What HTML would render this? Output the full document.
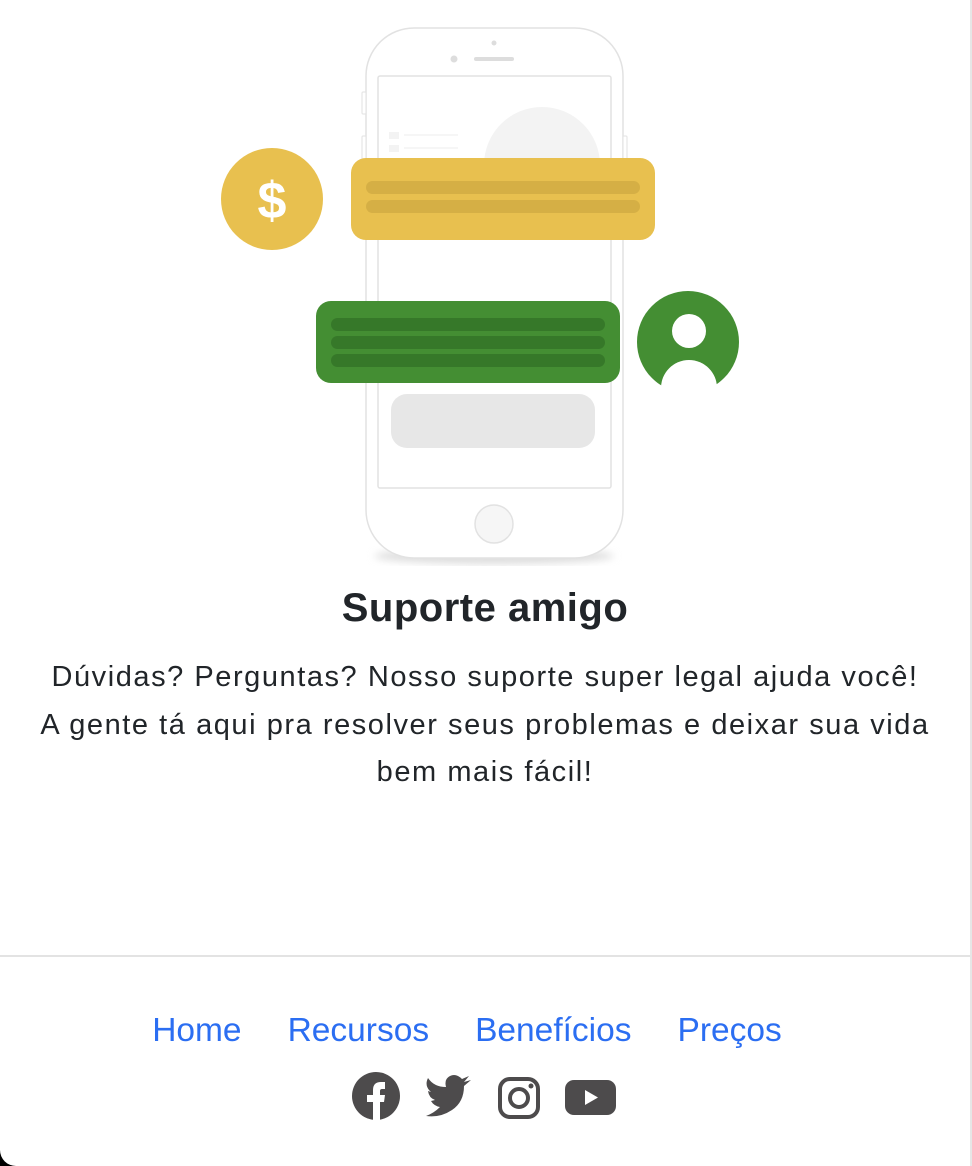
<!DOCTYPE html>
<html><head><meta charset="utf-8"><style>
html,body{margin:0;padding:0;background:#000;}
.page{position:relative;width:970px;height:1166px;background:#fff;border-right:2px solid #e6e6e6;border-bottom-left-radius:16px;overflow:hidden;font-family:"Liberation Sans",Helvetica,Arial,sans-serif;color:#212529;}
h2{position:absolute;top:584px;left:0;width:970px;text-align:center;margin:0;font-size:40px;font-weight:bold;line-height:48px;letter-spacing:0.5px;}
p{position:absolute;top:654px;left:0;width:970px;text-align:center;margin:0;font-size:29px;line-height:47.5px;letter-spacing:1.55px;white-space:nowrap;}
hr{position:absolute;top:955px;left:0;width:970px;margin:0;border:0;border-top:2px solid #e3e3e3;}
.links{position:absolute;top:1009px;left:-18px;width:970px;text-align:center;font-size:33.5px;line-height:44px;white-space:nowrap;}
.links a{color:#2b6ef2;text-decoration:none;margin:0 23px;}
</style></head><body><div class="page">
<svg width="970" height="580" style="position:absolute;left:0;top:0">
<defs><filter id="sh"><feGaussianBlur stdDeviation="4"/></filter></defs>
<ellipse cx="494" cy="556" rx="120" ry="8" fill="#ddd" filter="url(#sh)"/>
<rect x="366" y="28" width="257" height="530" rx="48" fill="#fff" stroke="#e2e2e2" stroke-width="1.5"/>
<rect x="362" y="92" width="4" height="22" rx="1" fill="#fff" stroke="#e2e2e2"/>
<rect x="362" y="136" width="4" height="40" rx="1" fill="#fff" stroke="#e2e2e2"/>
<rect x="623" y="136" width="4" height="40" rx="1" fill="#fff" stroke="#e2e2e2"/>
<circle cx="494" cy="43" r="2.5" fill="#ddd"/>
<circle cx="454" cy="59" r="3.5" fill="#ddd"/>
<rect x="474" y="57" width="40" height="4" rx="2" fill="#ddd"/>
<rect x="378" y="76" width="233" height="412" rx="2" fill="#fff" stroke="#e2e2e2" stroke-width="1.5"/>
<circle cx="542" cy="165" r="58" fill="#f3f3f3"/>
<rect x="389" y="132" width="10" height="7" fill="#f3f3f3"/><rect x="389" y="145" width="10" height="7" fill="#f3f3f3"/>
<line x1="404" y1="135" x2="458" y2="135" stroke="#eee"/><line x1="404" y1="148" x2="458" y2="148" stroke="#eee"/>
<circle cx="494" cy="524" r="19" fill="#f6f6f6" stroke="#e2e2e2" stroke-width="1.5"/>
<rect x="391" y="394" width="204" height="54" rx="16" fill="#e7e7e7"/>
<rect x="351" y="158" width="304" height="82" rx="15" fill="#e8c04f"/>
<rect x="366" y="181" width="274" height="13" rx="6.5" fill="#d5af45"/>
<rect x="366" y="200" width="274" height="13" rx="6.5" fill="#d5af45"/>
<circle cx="272" cy="199" r="51" fill="#e8c04f"/>
<text x="272" y="218" text-anchor="middle" font-family="Liberation Sans" font-weight="bold" font-size="52" fill="#fff">$</text>
<rect x="316" y="301" width="304" height="82" rx="15" fill="#448e33"/>
<rect x="331" y="318" width="274" height="13" rx="6.5" fill="#367829"/>
<rect x="331" y="336" width="274" height="13" rx="6.5" fill="#367829"/>
<rect x="331" y="354" width="274" height="13" rx="6.5" fill="#367829"/>
<circle cx="688" cy="342" r="51" fill="#448e33"/>
<circle cx="689" cy="331" r="17" fill="#fff"/>
<path d="M661 388 A28 28 0 0 1 717 388 Q689 400 661 388Z" fill="#fff"/>
</svg>
<h2>Suporte amigo</h2>
<p>Dúvidas? Perguntas? Nosso suporte super legal ajuda você!<br>A gente tá aqui pra resolver seus problemas e deixar sua vida<br>bem mais fácil!</p>
<hr>
<div class="links"><a>Home</a><a>Recursos</a><a>Benefícios</a><a>Preços</a></div>
<svg width="300" height="60" style="position:absolute;left:340px;top:1066px" fill="#4d4b4c">
<circle cx="36" cy="30" r="24"/>
<path d="M33 54 V36 H27 V29 H33 V24 Q33 16 41 16 H45 V23 H42 Q40 23 40 25 V29 H45 L44 36 H40 V54Z" fill="#fff"/>
<path d="M86 50 Q100 52 112 44 Q124 36 124 20 L131 14 L124 16 L129 10 L122 13 Q116 7 110 10 Q104 13 106 21 Q94 21 88 12 Q84 20 91 26 L88 25 Q89 32 95 34 L91 35 Q94 40 100 41 Q94 47 86 50Z"/>
<rect x="160" y="13" width="38" height="38" rx="10" fill="none" stroke="#4d4b4c" stroke-width="4"/>
<circle cx="179" cy="32" r="9" fill="none" stroke="#4d4b4c" stroke-width="4"/>
<circle cx="191" cy="20" r="2.5"/>
<rect x="225" y="14" width="51" height="35" rx="9"/>
<path d="M245 24 L258 31.5 L245 39Z" fill="#fff"/>
</svg>
</div></body></html>
